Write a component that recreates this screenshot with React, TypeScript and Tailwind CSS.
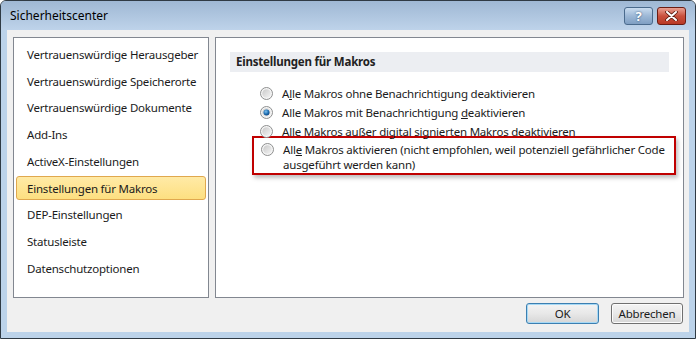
import React from 'react';

const items = [
  'Vertrauenswürdige Herausgeber',
  'Vertrauenswürdige Speicherorte',
  'Vertrauenswürdige Dokumente',
  'Add-Ins',
  'ActiveX-Einstellungen',
  'Einstellungen für Makros',
  'DEP-Einstellungen',
  'Statusleiste',
  'Datenschutzoptionen',
];

function Radio({ checked }: { checked?: boolean }) {
  return (
    <svg width="13" height="13" viewBox="0 0 13 13" className="shrink-0">
      <defs>
        <linearGradient id="rg" x1="0" y1="0" x2="1" y2="1">
          <stop offset="0" stopColor="#c9c9c9" />
          <stop offset="1" stopColor="#f4f4f4" />
        </linearGradient>
        <radialGradient id="dot" cx="0.4" cy="0.35" r="0.7">
          <stop offset="0" stopColor="#7fc0ee" />
          <stop offset="0.6" stopColor="#1f6fb2" />
          <stop offset="1" stopColor="#0d3f78" />
        </radialGradient>
      </defs>
      <circle cx="6.5" cy="6.5" r="6" fill="#f5f5f5" stroke="#8e8f8f" strokeWidth="1" />
      <circle cx="6.5" cy="6.5" r="4.3" fill="url(#rg)" />
      {checked && <circle cx="6.5" cy="6.5" r="3" fill="url(#dot)" />}
    </svg>
  );
}

function Opt({ checked, children }: { checked?: boolean; children: React.ReactNode }) {
  return (
    <div className="flex items-start gap-[9px]">
      <div className="pt-[1px]">
        <Radio checked={checked} />
      </div>
      <div className="leading-[15px] whitespace-nowrap">{children}</div>
    </div>
  );
}

export default function App() {
  return (
    <div
      className="w-[696px] h-[339px] flex flex-col border border-[#2f3a44] rounded-t-[6px] bg-[#bcd3ea] text-[11.5px] tracking-[-0.2px] text-[#1b1b1b] overflow-hidden"
      style={{ fontFamily: '"Noto Sans", "Open Sans", sans-serif' }}
    >
      {/* title bar */}
      <div className="h-[29px] shrink-0 flex items-center justify-between pl-[9px] pr-[9px] bg-gradient-to-b from-[#9fb8d4] to-[#bed3ea]">
        <span className="text-black text-[12px] tracking-normal">Sicherheitscenter</span>
        <div className="flex gap-[4px] pt-[1px]">
          <div className="w-[29px] h-[18px] rounded-[3px] border border-[#4a6a8c] bg-gradient-to-b from-[#c9dcef] via-[#9db8d6] to-[#7f9fc3] flex items-center justify-center text-white font-bold text-[13px] leading-none [text-shadow:0_0_2px_#23466e]">
            ?
          </div>
          <div className="w-[29px] h-[18px] rounded-[3px] border border-[#6b1d14] bg-gradient-to-b from-[#e8a093] via-[#c9503d] to-[#b93a26] flex items-center justify-center">
            <svg width="13" height="10" viewBox="0 0 13 10">
              <path d="M2 1 L11 9 M11 1 L2 9" stroke="#5a1a10" strokeWidth="3.6" strokeLinecap="round" />
              <path d="M2 1 L11 9 M11 1 L2 9" stroke="#ffffff" strokeWidth="2" strokeLinecap="round" />
            </svg>
          </div>
        </div>
      </div>

      {/* client */}
      <div className="flex-1 mx-[6px] mb-[6px] bg-[#f0f0f0] flex flex-col">
        <div className="flex gap-[6px] pl-[6px] pr-[5px] pt-[7px]">
          <div className="w-[196px] h-[261px] bg-white border border-[#828790] pt-[3px]">
            {items.map((t, i) => (
              <div key={t} className="h-[26.75px] flex items-center px-[2px] whitespace-nowrap">
                {i === 5 ? (
                  <div className="w-full h-[24px] flex items-center pl-[10px] rounded-[3px] border border-[#e0a84e] bg-gradient-to-b from-[#ffeaa6] to-[#fddf80]">
                    {t}
                  </div>
                ) : (
                  <div className="pl-[11px]">{t}</div>
                )}
              </div>
            ))}
          </div>
          <div className="flex-1 h-[261px] bg-white border border-[#828790] px-[14px] pt-[14px]">
            <div className="h-[20px] bg-[#eceef2] flex items-center pl-[6px] font-bold text-[#222]">
              Einstellungen für Makros
            </div>
            <div className="pl-[30px] pt-[14px] flex flex-col gap-[4px]">
              <Opt>
                A<span className="underline">l</span>le Makros ohne Benachrichtigung deaktivieren
              </Opt>
              <Opt checked>
                Alle Makros mit Benachrichtigung <span className="underline">d</span>eaktivieren
              </Opt>
              <Opt>
                Alle Makros außer di<span className="underline">g</span>ital signierten Makros deaktivieren
              </Opt>
            </div>
            <div className="ml-[22px] mr-[-7px] mt-[-3px] h-[39px] border-2 border-[#c00000] shadow-[2px_3px_4px_rgba(0,0,0,0.25)] pl-[7px] pt-[4px]">
              <Opt>
                All<span className="underline">e</span> Makros aktivieren (nicht empfohlen, weil potenziell gefährlicher Code
                <br />
                ausgeführt werden kann)
              </Opt>
            </div>
          </div>
        </div>
        <div className="flex justify-end gap-[12px] pr-[6px] pt-[5px]">
          <div className="w-[73px] h-[21px] rounded-[3px] border border-[#3c7fb1] bg-gradient-to-b from-[#f4f4f4] via-[#e8e8e8] to-[#d6d6d6] shadow-[inset_0_0_0_1px_#a7d9f5] flex items-center justify-center">
            OK
          </div>
          <div className="w-[72px] h-[21px] rounded-[3px] border border-[#707070] bg-gradient-to-b from-[#f4f4f4] via-[#e8e8e8] to-[#d6d6d6] shadow-[inset_0_0_0_1px_#fcfcfc] flex items-center justify-center">
            Abbrechen
          </div>
        </div>
      </div>
    </div>
  );
}
